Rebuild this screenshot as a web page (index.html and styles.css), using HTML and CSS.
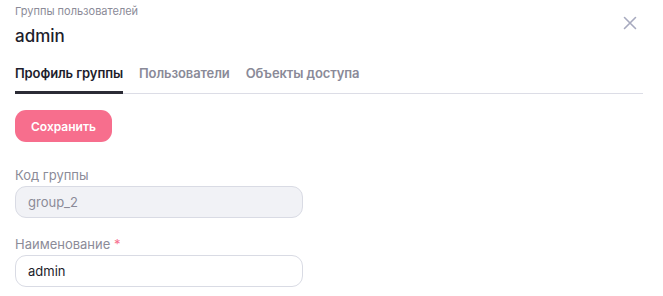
FILE: index.html
```html
<!DOCTYPE html>
<html lang="ru">
<head>
    <meta charset="UTF-8">
    <meta name="viewport" content="width=device-width, initial-scale=1.0">
    <title>admin</title>
    <link rel="stylesheet" href="styles.css">
</head>
<body>
    <div class="panel">
        <div class="header">
            <div class="header-text">
                <div class="breadcrumb">Группы пользователей</div>
                <h1>admin</h1>
            </div>
            <button class="close" type="button" aria-label="Закрыть">
                <svg width="14" height="14" viewBox="0 0 14 14">
                    <path d="M1.5 1.5 L12.5 12.5 M12.5 1.5 L1.5 12.5" stroke="#a7aabf" stroke-width="1.6" stroke-linecap="round"/>
                </svg>
            </button>
        </div>

        <div class="tabs">
            <a class="tab active" href="#">Профиль группы</a>
            <a class="tab" href="#">Пользователи</a>
            <a class="tab" href="#">Объекты доступа</a>
        </div>

        <button class="save" type="button">Сохранить</button>

        <div class="form-group">
            <label for="code">Код группы</label>
            <input type="text" id="code" value="group_2" disabled>
        </div>

        <div class="form-group">
            <label for="name">Наименование <span class="req">*</span></label>
            <input type="text" id="name" value="admin">
        </div>
    </div>
</body>
</html>
```

FILE: styles.css
```css
* {
    margin: 0;
    padding: 0;
    box-sizing: border-box;
    font-family: 'Inter', 'Noto Sans', sans-serif;
}

body {
    background-color: #ffffff;
    color: #1d1d2b;
}

.panel {
    padding: 3px 20px 0 15px;
}

.header {
    display: flex;
    justify-content: space-between;
    align-items: flex-start;
}

.breadcrumb {
    font-size: 11px;
    line-height: 16px;
    color: #8b8b98;
}

h1 {
    font-size: 17px;
    font-weight: 500;
    line-height: 22px;
    margin-top: 6px;
    color: #1d1d2b;
}

.close {
    background: none;
    border: none;
    cursor: pointer;
    margin-top: 13px;
    margin-right: 6px;
    width: 14px;
    height: 14px;
}

.close svg {
    display: block;
}

.tabs {
    display: flex;
    gap: 16px;
    margin-top: 17px;
    border-bottom: 1px solid #dcdde6;
}

.tab {
    font-size: 13px;
    font-weight: 600;
    line-height: 18px;
    letter-spacing: -0.1px;
    padding-bottom: 9px;
    color: #8a8a98;
    text-decoration: none;
    border-bottom: 3px solid transparent;
    margin-bottom: -1px;
}

.tab.active {
    color: #1d1d2b;
    border-bottom-color: #2b2b35;
}

.save {
    display: block;
    margin-top: 16px;
    height: 32px;
    padding: 0 16px;
    background-color: #f76e8d;
    color: white;
    border: none;
    border-radius: 11px;
    font-size: 12px;
    font-weight: 600;
    cursor: pointer;
}

.form-group {
    margin-top: 24px;
    width: 288px;
}

.form-group + .form-group {
    margin-top: 17px;
}

label {
    display: block;
    font-size: 13px;
    line-height: 18px;
    color: #8b8b98;
    margin-bottom: 2px;
}

.req {
    color: #f76e8d;
}

input {
    width: 100%;
    height: 32px;
    padding: 0 12px;
    border: 1px solid #d9dbe4;
    border-radius: 11px;
    font-size: 13px;
    color: #1d1d2b;
    background-color: white;
}

input:disabled {
    background-color: #f1f2f6;
    color: #8b8b98;
}
```
